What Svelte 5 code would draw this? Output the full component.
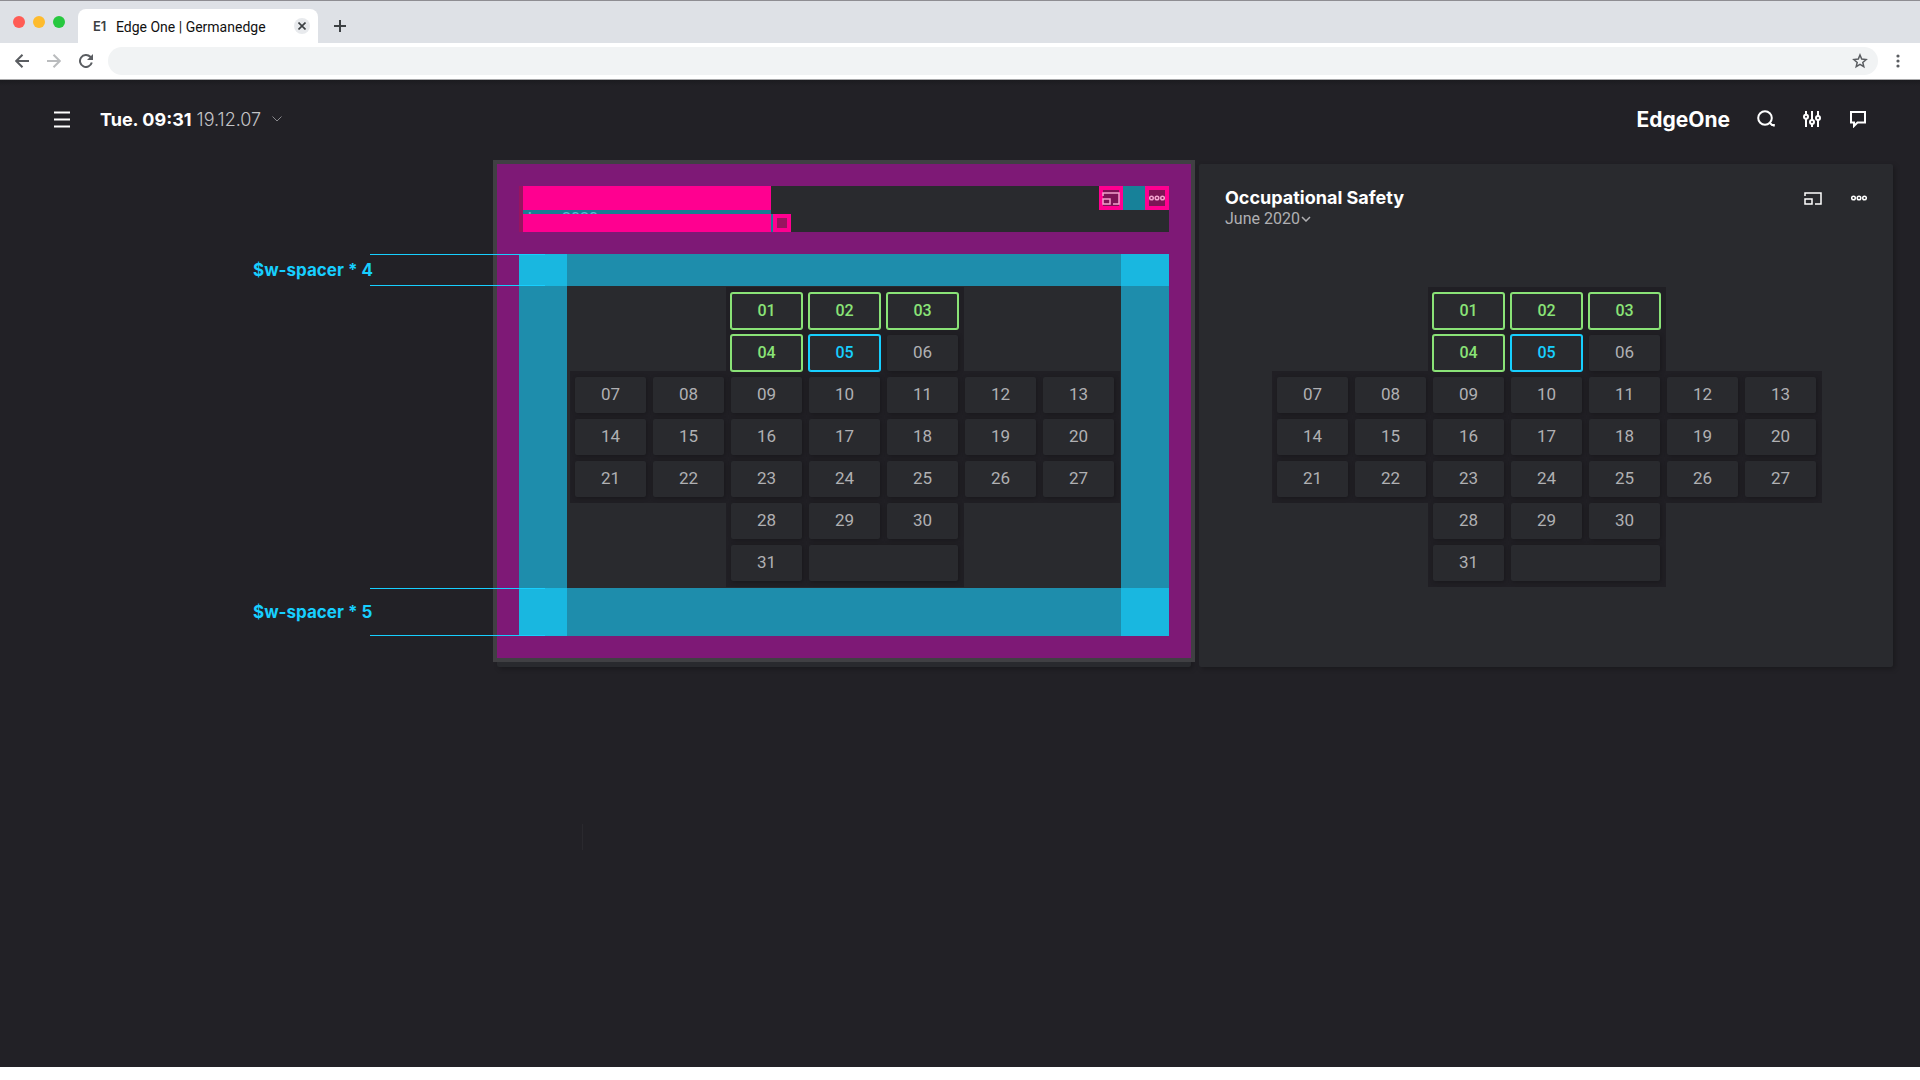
<script>
  let address = $state("");
  let selected = $state("05");

  const weeks = [
    [null, null, "01", "02", "03", null, null],
    [null, null, "04", "05", "06", null, null],
    ["07", "08", "09", "10", "11", "12", "13"],
    ["14", "15", "16", "17", "18", "19", "20"],
    ["21", "22", "23", "24", "25", "26", "27"],
    [null, null, "28", "29", "30", null, null]
  ];
  const safe = ["01", "02", "03", "04"];
  const widgets = [{ inspected: true }, { inspected: false }];
</script>

{#snippet day(label)}
  <td class="slot">
    <button
      class="day"
      class:safe={safe.includes(label)}
      class:today={selected === label}
      onclick={() => (selected = label)}>{label}</button
    >
  </td>
{/snippet}

{#snippet widget(inspected)}
  <section class="card" class:inspected>
    <div class="body">
      <header class="head">
        <div class="titles">
          <h2>Occupational Safety</h2>
          <button class="period">
            June 2020
            <svg width="10" height="6" viewBox="0 0 10 6"><path d="M1 1l4 4 4-4" /></svg>
          </button>
          {#if inspected}
            <div class="cover">
              <i class="cover-title"></i>
              <i class="cover-gap"></i>
              <div class="cover-row">
                <i class="cover-period"></i>
                <i class="cover-arrow"></i>
              </div>
            </div>
          {/if}
        </div>
        <div class="actions">
          <button class="tool" aria-label="Resize">
            <svg width="18" height="13" viewBox="0 0 18 13">
              <path d="M1 4V1h16v11h-6" />
              <path d="M1 7h7v5H1z" />
            </svg>
          </button>
          <i class="between"></i>
          <button class="tool" aria-label="More">
            <svg width="16" height="6" viewBox="0 0 16 6">
              <circle cx="2.5" cy="3" r="1.8" />
              <circle cx="8" cy="3" r="1.8" />
              <circle cx="13.5" cy="3" r="1.8" />
            </svg>
          </button>
        </div>
      </header>
      <div class="content">
        <div class="calendar">
          <table>
            <tbody>
              {#each weeks as week}
                <tr>
                  {#each week as label}
                    {#if label}
                      {@render day(label)}
                    {:else}
                      <td></td>
                    {/if}
                  {/each}
                </tr>
              {/each}
              <tr>
                <td></td>
                <td></td>
                {@render day("31")}
                <td class="slot" colspan="2"><div class="day"></div></td>
                <td></td>
                <td></td>
              </tr>
            </tbody>
          </table>
        </div>
      </div>
    </div>
  </section>
{/snippet}

<div class="window">
  <div class="tabs">
    <div class="lights">
      <i class="red"></i>
      <i class="yellow"></i>
      <i class="green"></i>
    </div>
    <div class="tab">
      <b>E1</b>
      <span>Edge One | Germanedge</span>
      <button class="close" aria-label="Close tab">
        <svg width="8" height="8" viewBox="0 0 8 8"><path d="M.5.5l7 7M7.5.5l-7 7" /></svg>
      </button>
    </div>
    <button class="new-tab" aria-label="New tab">
      <svg width="12" height="12" viewBox="0 0 12 12"><path d="M6 0v12M0 6h12" /></svg>
    </button>
  </div>
  <div class="toolbar">
    <button aria-label="Back">
      <svg width="14" height="14" viewBox="0 0 14 14"><path d="M14 7H1.5M7.5.7L1.2 7l6.3 6.3" /></svg>
    </button>
    <button class="off" aria-label="Forward">
      <svg width="14" height="14" viewBox="0 0 14 14"><path d="M0 7h12.5M6.5.7L12.8 7l-6.3 6.3" /></svg>
    </button>
    <button aria-label="Reload">
      <svg width="14" height="14" viewBox="0 0 14 14">
        <path d="M12.8 8.6A6 6 0 1 1 11.3 2.8L12 3.5" />
        <path class="fill" d="M14 0v6H8z" />
      </svg>
    </button>
    <div class="omnibox">
      <input aria-label="Address" bind:value={address} />
      <button aria-label="Bookmark">
        <svg class="star" width="16" height="16" viewBox="0 0 16 16">
          <path d="M8 2l1.7 4.1 4.4.4-3.3 2.9 1 4.3L8 11.4l-3.8 2.3 1-4.3-3.3-2.9 4.4-.4z" />
        </svg>
      </button>
    </div>
    <button class="kebab" aria-label="Menu">
      <svg width="4" height="14" viewBox="0 0 4 14">
        <circle class="fill" cx="2" cy="2" r="1.6" />
        <circle class="fill" cx="2" cy="7" r="1.6" />
        <circle class="fill" cx="2" cy="12" r="1.6" />
      </svg>
    </button>
  </div>

  <div class="app">
    <header class="topbar">
      <button class="menu" aria-label="Navigation">
        <svg width="16" height="17" viewBox="0 0 16 17"><path d="M0 1.5h16M0 8.5h16M0 15.5h16" /></svg>
      </button>
      <button class="clock">
        <b>Tue. 09:31</b>
        <span>19.12.07</span>
        <svg width="10" height="6" viewBox="0 0 10 6"><path d="M.5.5L5 5 9.5.5" /></svg>
      </button>
      <a class="brand" href="/">EdgeOne</a>
      <nav>
        <button aria-label="Search">
          <svg width="18" height="18" viewBox="0 0 18 18">
            <circle cx="8" cy="8" r="6.8" />
            <path d="M12.7 12.7l2.3 2.3h1.8v1.5" />
          </svg>
        </button>
        <button aria-label="Settings">
          <svg width="18" height="18" viewBox="0 0 18 18">
            <path d="M3 1v4M3 8.5V17M9 1v9M9 14v3M15 1v5.5M15 10v7" />
            <circle cx="3" cy="6.8" r="2" />
            <circle cx="9" cy="12" r="2" />
            <circle cx="15" cy="8" r="2" />
          </svg>
        </button>
        <button aria-label="Messages">
          <svg width="18" height="18" viewBox="0 0 18 18">
            <path d="M2 2h14v10.5H8.5L5 16v-3.5H2z" />
          </svg>
        </button>
      </nav>
    </header>

    <main>
      <div class="notes">
        <div class="note top">
          <span>$w-spacer * 4</span>
          <i></i>
        </div>
        <div class="note bottom">
          <span>$w-spacer * 5</span>
          <i></i>
        </div>
      </div>
      {#each widgets as { inspected }}
        {@render widget(inspected)}
      {/each}
    </main>
    <div class="caret"></div>
  </div>
</div>

<style>
  :global(body) {
    background: #fff;
  }
  .window {
    display: flex;
    flex-direction: column;
    box-sizing: border-box;
    min-height: 100vh;
    padding-bottom: 13px;
    font-family: Inter, "Liberation Sans", sans-serif;
  }
  button {
    display: flex;
    align-items: center;
    justify-content: center;
    padding: 0;
    border: 0;
    background: none;
    color: inherit;
    font: inherit;
    cursor: pointer;
  }
  svg {
    display: block;
    flex: none;
    fill: none;
    stroke: currentColor;
    stroke-width: 2;
  }
  .fill {
    fill: currentColor;
    stroke: none;
  }

  /* browser chrome */
  .tabs {
    display: flex;
    align-items: flex-end;
    height: 42px;
    border-top: 1px solid #8e8d92;
    background: #dee1e6;
  }
  .lights {
    display: flex;
    align-self: flex-start;
    gap: 8px;
    width: 65px;
    padding: 15px 0 0 13px;
  }
  .lights i {
    width: 12px;
    height: 12px;
    border-radius: 50%;
  }
  .red {
    background: #ff5c55;
  }
  .yellow {
    background: #febb2d;
  }
  .green {
    background: #27c83f;
  }
  .tab {
    display: flex;
    align-items: center;
    box-sizing: border-box;
    width: 240px;
    height: 34px;
    padding: 0 8px 0 15px;
    border-radius: 8px 8px 0 0;
    background: #fff;
    color: #111;
    font: 14px Roboto, sans-serif;
  }
  .tab span {
    padding-top: 2px;
  }
  .tab b {
    width: 23px;
    color: #3c4043;
    font: 600 13px Inter, sans-serif;
  }
  .close {
    width: 16px;
    height: 16px;
    margin-left: auto;
    border-radius: 50%;
    background: #e8eaed;
    color: #3c4043;
  }
  .close svg {
    stroke-width: 1.6;
  }
  .new-tab {
    width: 44px;
    height: 34px;
    color: #3c4043;
  }
  .toolbar {
    display: flex;
    align-items: center;
    gap: 18px;
    height: 36px;
    padding: 0 20px 0 15px;
    border-bottom: 1px solid #a9a9ab;
    background: #fff;
    color: #5a5d61;
  }
  .off {
    color: #babcbe;
  }
  .omnibox {
    display: flex;
    flex: 1;
    height: 28px;
    margin-left: -3px;
    border-radius: 14px;
    background: #f1f3f4;
  }
  .omnibox input {
    flex: 1;
    padding: 0 16px;
    border: 0;
    background: none;
    font: 14px Roboto, sans-serif;
  }
  .omnibox button {
    width: 36px;
  }
  .star {
    stroke-width: 1.5;
  }

  /* application */
  .app {
    flex: 1;
    background: linear-gradient(#1b1b1f, #222126 6px);
    color: #fff;
  }
  .topbar {
    display: flex;
    align-items: center;
    box-sizing: border-box;
    height: 84px;
    padding: 0 53px 6px 54px;
  }
  .clock {
    gap: 5px;
    margin-left: 30px;
    font-size: 18px;
  }
  .clock span {
    color: #c4c4c7;
    font-weight: 300;
  }
  .clock svg {
    margin-left: 6px;
    color: #88888c;
    stroke-width: 1;
  }
  .brand {
    margin-left: auto;
    color: #fff;
    font-size: 21px;
    font-weight: 700;
    text-decoration: none;
  }
  nav {
    display: flex;
    gap: 28px;
    margin-left: 27px;
  }
  main {
    display: flex;
    align-items: flex-start;
    gap: 8px;
    padding-right: 27px;
  }
  .notes {
    flex: none;
    box-sizing: border-box;
    width: 489px;
    padding: 90px 0 0 253px;
  }
  .note {
    display: flex;
    align-items: center;
    color: #17cfff;
    font-size: 17px;
    font-weight: 700;
    white-space: nowrap;
  }
  .note span {
    flex: none;
    width: 117px;
  }
  .note i {
    z-index: 1;
    flex: none;
    align-self: stretch;
    box-sizing: border-box;
    width: 175px;
    border: solid #17cfff;
    border-width: 1px 0;
  }
  .top {
    height: 32px;
  }
  .bottom {
    height: 48px;
    margin-top: 302px;
  }

  .card {
    flex: 1;
    min-width: 0;
    padding-bottom: 9px;
    border-radius: 2px;
    background: #292a2e;
    box-shadow: 2px 2px 5px rgba(0, 0, 0, 0.25);
  }
  .body {
    padding: 22px;
  }
  .head {
    display: flex;
    justify-content: space-between;
    align-items: flex-start;
    height: 46px;
    margin-bottom: 22px;
  }
  .titles {
    position: relative;
    padding-left: 4px;
  }
  h2 {
    margin: 0;
    font-size: 18px;
    font-weight: 700;
    line-height: 24px;
  }
  .period {
    gap: 1px;
    color: #b0b0b3;
    font: 16px/18px Roboto, sans-serif;
  }
  .period svg {
    stroke-width: 1.5;
  }
  .actions {
    display: flex;
  }
  .tool {
    box-sizing: border-box;
    width: 24px;
    height: 24px;
  }
  .tool svg {
    stroke-width: 1.5;
  }
  .between {
    width: 22px;
  }
  .content {
    padding: 32px 48px 48px;
  }
  .calendar {
    padding: 4px;
  }
  table {
    width: 100%;
    border-spacing: 0;
    table-layout: fixed;
  }
  td {
    padding: 3px 3px 3px 4px;
  }
  .slot {
    background: #201f24;
    box-shadow: 1px 1px 0 2px #201f24, 1px -1px 0 2px #201f24;
  }
  .day {
    position: relative;
    box-sizing: border-box;
    width: 100%;
    height: 36px;
    padding-bottom: 2px;
    border-radius: 2px;
    background: #292a2e;
    box-shadow: 1px 1px 4px rgba(0, 0, 0, 0.25);
    color: #b0b0b3;
    font: 17px Roboto, sans-serif;
  }
  .safe,
  .today {
    border: 1px solid;
    box-shadow: 0 0 0 1px currentColor;
    font-size: 16px;
    font-weight: 500;
  }
  .safe {
    color: #8ae377;
  }
  .today {
    color: #17cfff;
  }

  /* box model overlay */
  .inspected .body {
    background: #7e1976;
    box-shadow: 0 0 0 4px #404043;
  }
  .inspected .head {
    background: #292a2e;
  }
  .inspected .content {
    background:
      linear-gradient(#19b7e0, #19b7e0) 0 0 / 48px 32px,
      linear-gradient(#19b7e0, #19b7e0) 100% 0 / 48px 32px,
      linear-gradient(#19b7e0, #19b7e0) 0 100% / 48px 48px,
      linear-gradient(#19b7e0, #19b7e0) 100% 100% / 48px 48px,
      #1e8dac;
    background-repeat: no-repeat;
  }
  .inspected .calendar {
    background: #292a2e;
  }
  .inspected .period {
    color: #fff;
  }
  .cover {
    position: absolute;
    top: 0;
    left: 0;
    width: 272px;
    height: 46px;
    box-sizing: border-box;
    border-left: 4px solid #981460;
  }
  .cover i {
    display: block;
    box-sizing: border-box;
  }
  .cover-title {
    width: 248px;
    height: 24px;
    background: #ff0090;
  }
  .cover-gap {
    width: 248px;
    height: 4px;
    background: rgba(17, 161, 190, 0.7);
  }
  .cover-row {
    display: flex;
  }
  .cover-period {
    width: 250px;
    height: 18px;
    border-right: 2px solid #178199;
    background: #ff0090;
  }
  .cover-arrow {
    width: 18px;
    height: 18px;
    border: 4px solid #ff0090;
    background: #981460;
  }
  .inspected .tool {
    border: 4px solid #ff0090;
    background: #7d1556;
    color: #f2a3cd;
  }
  .inspected .between {
    background: #178199;
  }

  .caret {
    width: 1px;
    height: 26px;
    margin: 157px 0 0 582px;
    background: #2a292e;
  }
</style>
